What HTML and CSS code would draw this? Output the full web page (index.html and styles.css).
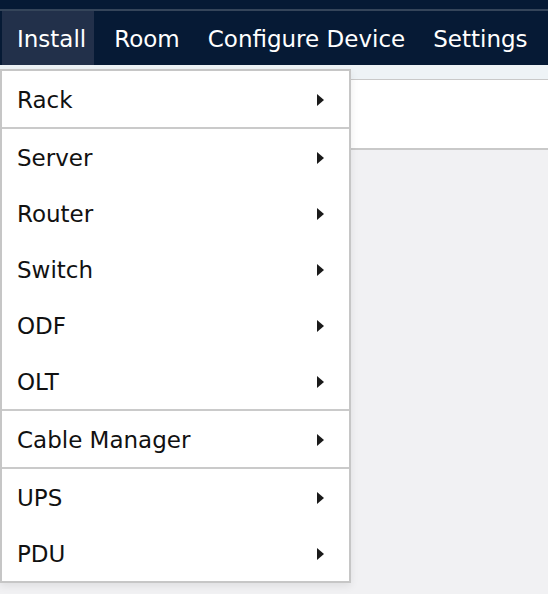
FILE: index.html
```html
<!DOCTYPE html>
<html>
<head>
<meta charset="utf-8">
<link rel="stylesheet" href="styles.css">
</head>
<body>
<div class="topstrip"></div>
<nav class="navbar">
  <div class="nav-item active">Install</div>
  <div class="nav-item">Room</div>
  <div class="nav-item">Configure Device</div>
  <div class="nav-item">Settings</div>
</nav>
<div class="subbar"></div>
<div class="panel"></div>

<div class="menu">
  <div class="group">
    <div class="item"><span>Rack</span><i class="arrow"></i></div>
  </div>
  <div class="group">
    <div class="item"><span>Server</span><i class="arrow"></i></div>
    <div class="item"><span>Router</span><i class="arrow"></i></div>
    <div class="item"><span>Switch</span><i class="arrow"></i></div>
    <div class="item"><span>ODF</span><i class="arrow"></i></div>
    <div class="item"><span>OLT</span><i class="arrow"></i></div>
  </div>
  <div class="group">
    <div class="item"><span>Cable Manager</span><i class="arrow"></i></div>
  </div>
  <div class="group">
    <div class="item"><span>UPS</span><i class="arrow"></i></div>
    <div class="item"><span>PDU</span><i class="arrow"></i></div>
  </div>
</div>
</body>
</html>
```
FILE: styles.css
```css
html, body {
  margin: 0;
  padding: 0;
}
body {
  background: #f1f1f3;
  font-family: "DejaVu Sans", Verdana, sans-serif;
  width: 548px;
  height: 594px;
  overflow: hidden;
  position: relative;
}
.topstrip {
  height: 9px;
  background: #061a35;
  border-bottom: 2px solid #35455a;
}
.navbar {
  display: flex;
  height: 54px;
  background: #061a35;
  padding-left: 2px;
  white-space: nowrap;
}
.nav-item {
  display: flex;
  align-items: center;
  padding: 1px 8px 0 20px;
  color: #ffffff;
  font-size: 23px;
}
.nav-item.active {
  padding-left: 15px;
  background: #22304a;
}
.subbar {
  height: 14px;
  background: #eef3f6;
  border-bottom: 1px solid #c9c9c9;
}
.panel {
  height: 68px;
  background: #ffffff;
  border-bottom: 2px solid #c9c9c9;
}
.menu {
  position: absolute;
  left: 0;
  top: 69px;
  width: 347px;
  background: #ffffff;
  border: 2px solid #c6c6c6;
  box-shadow: 0 3px 8px rgba(0,0,0,0.08);
}
.group + .group {
  border-top: 2px solid #cacaca;
}
.item {
  height: 56px;
  display: flex;
  align-items: center;
  justify-content: space-between;
  padding: 2px 25px 0 15px;
  box-sizing: border-box;
  font-size: 23px;
  color: #111111;
}
.arrow {
  width: 0;
  height: 0;
  border-top: 6px solid transparent;
  border-bottom: 6px solid transparent;
  border-left: 7px solid #1a1a1a;
}
```
